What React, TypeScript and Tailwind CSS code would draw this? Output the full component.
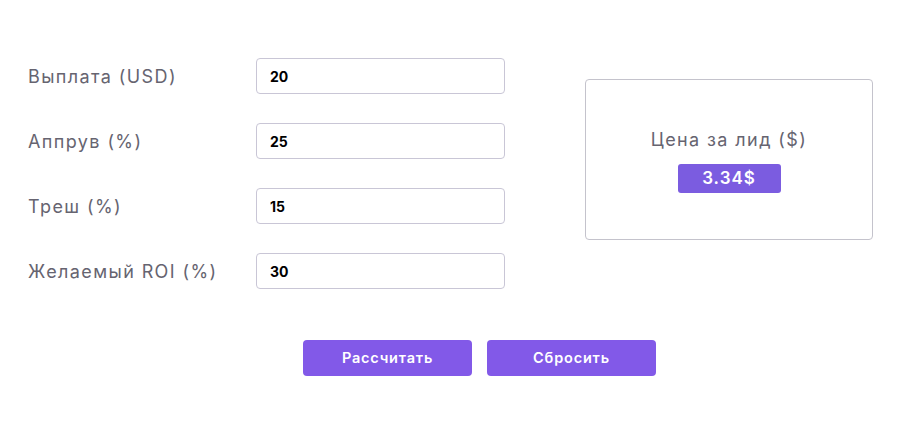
import React from "react";

const fields = [
  { label: "Выплата (USD)", value: "20" },
  { label: "Аппрув (%)", value: "25" },
  { label: "Треш (%)", value: "15" },
  { label: "Желаемый ROI (%)", value: "30" },
];

const App = () => {
  const [values, setValues] = React.useState(fields.map((f) => f.value));

  return (
    <div
      className="w-[900px] h-[421px] bg-white"
      style={{ fontFamily: "Inter, 'Noto Sans', sans-serif" }}
    >
      <div className="flex pt-[58px] pl-[28px]">
        {/* inputs */}
        <div className="flex flex-col gap-[29px]">
          {fields.map((f, i) => (
            <div key={f.label} className="flex items-center">
              <label className="w-[228px] text-[18px] tracking-[1.4px] text-[#666470] pt-[1px]">
                {f.label}
              </label>
              <input
                className="w-[249px] h-[36px] border border-[#c9c6d6] rounded-[4px] px-[13px] text-[14px] font-bold text-black outline-none"
                type="text"
                value={values[i]}
                onChange={(e) => {
                  const next = [...values];
                  next[i] = e.target.value;
                  setValues(next);
                }}
              />
            </div>
          ))}
        </div>

        {/* result */}
        <div className="ml-[80px] mt-[21px] w-[288px] h-[161px] border border-[#c4c3cc] rounded-[4px] flex flex-col items-center justify-center">
          <div className="text-[18px] tracking-[1.4px] text-[#666470]">
            Цена за лид ($)
          </div>
          <div className="mt-[11px] w-[103px] h-[29px] rounded-[3px] bg-[#7b5ce0] text-white text-[17px] tracking-[1px] font-semibold flex items-center justify-center">
            3.34$
          </div>
        </div>
      </div>

      <div className="flex gap-[15px] pl-[303px] mt-[51px]">
        <button className="w-[169px] h-[36px] rounded-[4px] bg-[#8259e8] text-white text-[14.5px] tracking-[0.8px] font-semibold">
          Рассчитать
        </button>
        <button className="w-[169px] h-[36px] rounded-[4px] bg-[#8259e8] text-white text-[14.5px] tracking-[0.8px] font-semibold">
          Сбросить
        </button>
      </div>
    </div>
  );
};

export default App;
